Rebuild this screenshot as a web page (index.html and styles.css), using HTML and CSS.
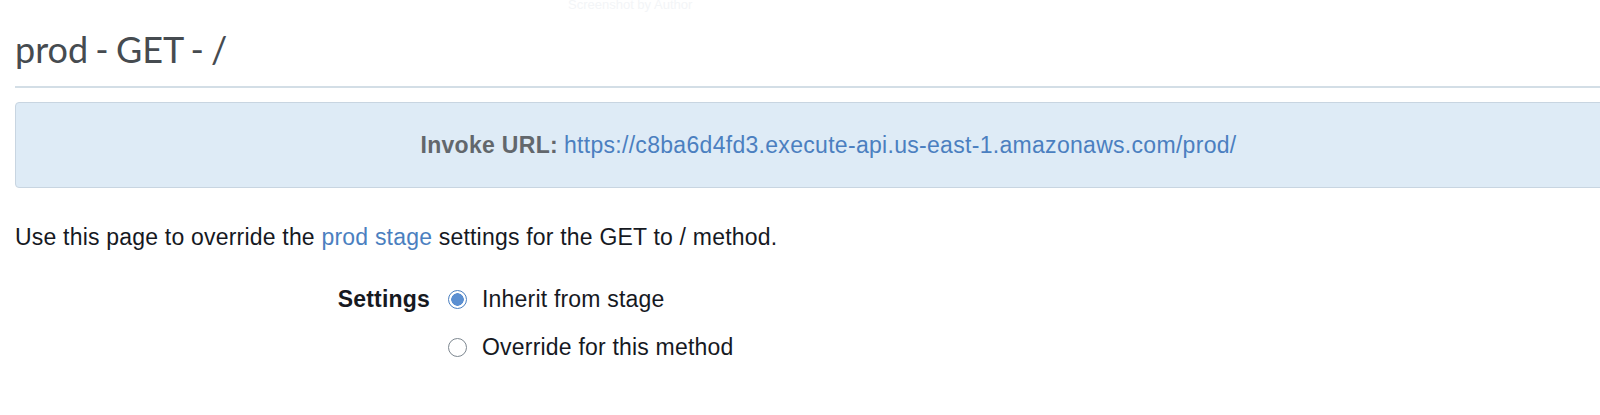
FILE: index.html
```html
<!DOCTYPE html>
<html lang="en">
<head>
<meta charset="utf-8">
<title>prod - GET - /</title>
<link rel="stylesheet" href="styles.css">
</head>
<body>
<div class="watermark">Screenshot by Author</div>
<main class="page">
  <h1 class="title">prod - GET - /</h1>
  <hr class="rule">
  <div class="invoke">
    <span class="invoke-label">Invoke URL:</span>
    <a class="link" href="#">https://c8ba6d4fd3.execute-api.us-east-1.amazonaws.com/prod/</a>
  </div>
  <p class="intro">Use this page to override the <a class="link" href="#">prod stage</a> settings for the GET to / method.</p>
  <div class="form-row">
    <div class="form-label">Settings</div>
    <div class="options">
      <label class="option"><span class="radio radio-on"></span><span>Inherit from stage</span></label>
      <label class="option"><span class="radio"></span><span>Override for this method</span></label>
    </div>
  </div>
</main>
</body>
</html>
```
FILE: styles.css
```css
html, body {
  margin: 0;
  padding: 0;
  background: #ffffff;
  overflow: hidden;
}
body {
  font-family: "Liberation Sans", Arial, sans-serif;
  color: #16191f;
  position: relative;
}
.watermark {
  position: absolute;
  top: -3px;
  left: 568px;
  font-size: 13px;
  color: #f3f5f7;
}
.page {
  padding: 27px 0 0 15px;
}
.title {
  margin: 0;
  font-family: Lato, "Open Sans", sans-serif;
  font-weight: 400;
  font-size: 36px;
  line-height: 44px;
  word-spacing: -2px;
  color: #464b50;
}
.rule {
  margin: 15px 0 0 0;
  border: 0;
  height: 2px;
  background: #d3dee6;
}
.invoke {
  margin: 14px -42px 0 0;
  height: 84px;
  display: flex;
  align-items: center;
  justify-content: center;
  gap: 6px;
  background: #deebf6;
  border: 1px solid #c8d5e1;
  border-radius: 4px;
  font-size: 23px;
  letter-spacing: 0.3px;
}
.invoke-label {
  font-weight: 700;
  color: #62676c;
}
.link {
  color: #4b7fc0;
  text-decoration: none;
}
.intro {
  margin: 34px 0 0 0;
  font-size: 23px;
  line-height: 30px;
  letter-spacing: 0.2px;
}
.form-row {
  margin-top: 32px;
  display: grid;
  grid-template-columns: 415px auto;
  column-gap: 18px;
}
.form-label {
  text-align: right;
  font-weight: 700;
  font-size: 23px;
  line-height: 30px;
  letter-spacing: 0.2px;
}
.options {
  display: flex;
  flex-direction: column;
  gap: 18px;
}
.option {
  display: flex;
  align-items: center;
  gap: 15px;
  font-size: 23px;
  line-height: 30px;
  letter-spacing: 0.2px;
}
.radio {
  width: 19px;
  height: 19px;
  box-sizing: border-box;
  border-radius: 50%;
  border: 1.5px solid #7d8790;
  background: #ffffff;
}
.radio-on {
  border-color: #4b7fc0;
  background: radial-gradient(circle, #5b8fd1 0 6px, #ffffff 6.5px);
}
```
